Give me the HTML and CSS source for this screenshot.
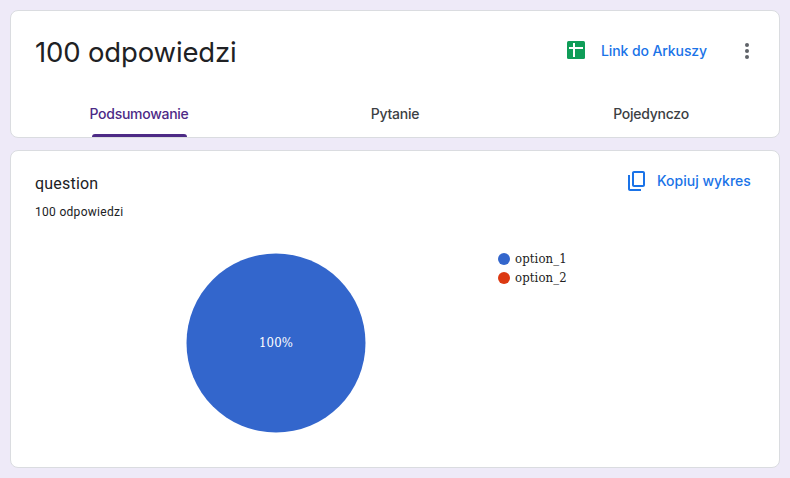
FILE: index.html
```html
<!DOCTYPE html>
<html lang="pl">
<head>
<meta charset="utf-8">
<title>Odpowiedzi</title>
<link rel="stylesheet" href="styles.css">
</head>
<body>
<main class="page">
  <section class="card summary">
    <header class="summary-head">
      <h1 class="title">100 odpowiedzi</h1>
      <a class="action sheets">
        <svg class="sheets-icon" width="18" height="18" viewBox="0 0 18 18"><rect width="18" height="18" rx="1.500" fill="#0f9d58"/><path d="M2 7h14M7 2v14" stroke="#fff" stroke-width="2" fill="none"/></svg>
        <span class="action-label sheets-label">Link do Arkuszy</span>
      </a>
      <svg class="more" width="24" height="24" viewBox="0 0 24 24" fill="#5f6368"><circle cx="12" cy="6" r="2"/><circle cx="12" cy="12" r="2"/><circle cx="12" cy="18" r="2"/></svg>
    </header>
    <nav class="tabs">
      <a class="tab active"><span class="tab-label tab-summary">Podsumowanie</span></a>
      <a class="tab"><span class="tab-label tab-question">Pytanie</span></a>
      <a class="tab"><span class="tab-label tab-single">Pojedynczo</span></a>
    </nav>
  </section>
  <section class="card question">
    <header class="question-head">
      <div class="question-text">
        <h2 class="question-title">question</h2>
        <p class="count">100 odpowiedzi</p>
      </div>
      <a class="action copy">
        <svg width="24" height="24" viewBox="0 0 24 24" fill="#1a73e8"><path d="M18 1H9c-1.100 0-2 .9-2 2v12c0 1.100.9 2 2 2h9c1.100 0 2-.9 2-2V3c0-1.100-.9-2-2-2zm0 14H9V3h9v12zM3 15V5h2v14h11v2H5c-1.100 0-2-.9-2-2v-4z" transform="translate(0 1)"/></svg>
        <span class="action-label copy-label">Kopiuj wykres</span>
      </a>
    </header>
    <div class="chart">
      <svg class="pie" width="180" height="180" viewBox="0 0 180 180"><circle cx="90" cy="90" r="89.500" fill="#3366cc"/><text class="pie-label" x="90" y="94" text-anchor="middle">100%</text></svg>
      <ul class="legend">
        <li class="legend-item"><span class="dot dot-blue"></span><span class="legend-label">option_1</span></li>
        <li class="legend-item"><span class="dot dot-red"></span><span class="legend-label">option_2</span></li>
      </ul>
    </div>
  </section>
</main>
</body>
</html>
```

FILE: styles.css
```css
* { box-sizing: border-box; }
body {
  margin: 0;
  background: #eeeaf8;
  color: #202124;
  font-family: Roboto, sans-serif;
}
h1, h2, p, ul { margin: 0; padding: 0; font-weight: 400; }
.page {
  display: flex;
  flex-direction: column;
  gap: 12px;
  height: 478px;
  padding: 10px;
}
.card {
  background: #fff;
  border: 1px solid #dadce0;
  border-radius: 8px;
}
.summary {
  display: flex;
  flex-direction: column;
  height: 128px;
}
.summary-head {
  display: flex;
  align-items: center;
  height: 80px;
  padding: 0 20px 0 24px;
}
.title {
  flex: 1;
  padding-top: 2px;
  font-family: Inter, sans-serif;
  font-size: 27.500px;
  line-height: 36px;
  letter-spacing: -0.150px;
  white-space: nowrap;
}
.action {
  display: flex;
  align-items: center;
  color: #1a73e8;
}
.sheets { gap: 16px; }
.sheets-icon { margin-top: -2px; }
.action-label, .tab-label {
  font-family: Inter, sans-serif;
  font-size: 14px;
  font-weight: 500;
  line-height: 20px;
  white-space: nowrap;
}
.sheets-label { width: 106px; letter-spacing: -0.100px; }
.tab-summary { letter-spacing: -0.280px; }
.tab-question, .tab-single { letter-spacing: -0.250px; }
.more { margin-left: 28px; }
.tabs {
  display: grid;
  grid-template-columns: repeat(3, 1fr);
  flex: 1;
}
.tab {
  display: flex;
  flex-direction: column;
  align-items: center;
  justify-content: space-between;
  padding-top: 13px;
  color: #3c4043;
}
.active { color: #4d2a86; }
.active::after {
  content: "";
  width: 95px;
  height: 3px;
  border-radius: 3px 3px 0 0;
  background: #4d2a86;
}
.question { height: 318px; }
.question-head {
  display: flex;
  justify-content: space-between;
  height: 84px;
  padding: 18px 28px 0 24px;
}
.question-title {
  margin-top: 3px;
  font-size: 16px;
  line-height: 24px;
  letter-spacing: 0.2px;
}
.count {
  margin-top: 8px;
  font-size: 12px;
  line-height: 16px;
  letter-spacing: 0.3px;
}
.copy { height: 24px; gap: 8px; }
.copy-label { width: 94px; }
.chart {
  display: flex;
  align-items: flex-start;
  gap: 132px;
  padding: 18px 0 0 175px;
  font-family: "DejaVu Serif Condensed", "DejaVu Serif", serif;
  font-size: 13px;
}
.pie-label { fill: #fff; font-size: 13px; letter-spacing: 0.200px; }
.legend { margin-top: -4px; list-style: none; color: #222; }
.legend-item {
  display: flex;
  align-items: center;
  gap: 5px;
  height: 19px;
  line-height: 19px;
}
.legend-label { letter-spacing: 0.120px; }
.dot {
  width: 12px;
  height: 12px;
  border-radius: 50%;
}
.dot-blue { background: #3366cc; }
.dot-red { background: #dc3912; }
```
